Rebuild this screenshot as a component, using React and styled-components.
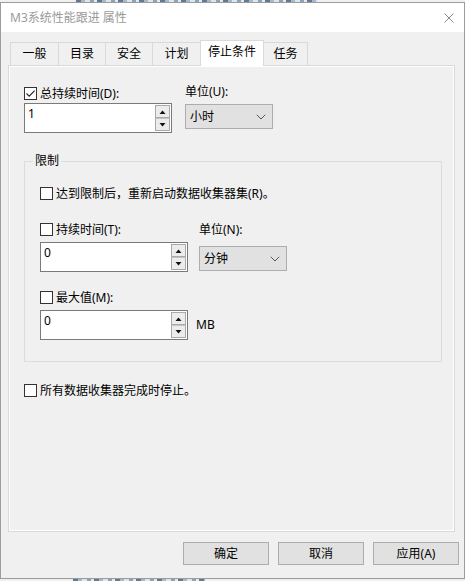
import React from 'react';
import styled, { createGlobalStyle } from 'styled-components';

const Global = createGlobalStyle`
  html, body { margin: 0; padding: 0; }
  body {
    width: 465px; height: 581px; overflow: hidden; background: #eef0f2;
    font-family: "Noto Sans", "Noto Sans CJK SC", sans-serif;
    font-size: 12px; color: #000;
  }
  * { box-sizing: border-box; }
`;

const Screen = styled.div`
  width: 465px; height: 581px; display: flex; flex-direction: column; overflow: hidden;
`;

const Backdrop = styled.div`
  flex: none; height: 2px;
  background:
    repeating-linear-gradient(90deg, #5f7a94 0 5px, #a9b9c8 5px 9px, #dfe5ea 9px 14px, #8ea3b6 14px 18px, #e6eaee 18px 21px)
      ${p => p.$from}px 0 / ${p => p.$to - p.$from}px 100% no-repeat,
    #eef0f2;
`;

const Window = styled.div`
  flex: 1; display: flex; flex-direction: column;
  border: 1px solid #9c9c9c; background: #f0f0f0;
`;

const TitleBar = styled.div`
  flex: none; height: 29px; background: #fff;
  display: flex; align-items: center; justify-content: space-between;
  padding-left: 9px;
`;

const Title = styled.span`
  color: #9a9a9a; font-size: 12px; line-height: 16px; white-space: nowrap;
`;

const CloseButton = styled.div`
  width: 30px; height: 29px; display: flex; align-items: center; justify-content: center;
`;

const Body = styled.div`
  flex: 1; display: flex; flex-direction: column; padding: 8px 0 0 7px;
`;

const TabRow = styled.div`
  display: flex; align-items: flex-end; height: 26px; padding-left: 2px;
  margin-bottom: -1px; position: relative; z-index: 1;
`;

const Tab = styled.div`
  width: ${p => p.$w}px;
  height: ${p => (p.$active ? 26 : 23)}px;
  margin-bottom: ${p => (p.$active ? 0 : 1)}px;
  margin-left: ${p => (p.$first ? 0 : -1)}px;
  border: 1px solid #d9d9d9; border-bottom: none;
  background: ${p => (p.$active ? '#fff' : '#f0f0f0')};
  position: relative; z-index: ${p => (p.$active ? 2 : 1)};
  display: flex; align-items: center; justify-content: center;
  padding-bottom: ${p => (p.$active ? 4 : 0)}px;
  font-size: 12px; line-height: 16px; white-space: nowrap;
`;

const Panel = styled.div`
  width: 447px; height: 467px; flex: none;
  border: 1px solid #d9d9d9; box-shadow: inset 0 0 0 1px #fff;
  background: #f0f0f0;
  padding: 19px 12px 0 15px;
  display: flex; flex-direction: column;
`;

const FieldGrid = styled.div`
  display: grid; grid-template-columns: 148px auto; column-gap: ${p => p.$gap}px;
  margin-top: ${p => p.$mt || 0}px; justify-content: start;
`;

const FieldColumn = styled.div`
  display: flex; flex-direction: column; align-items: flex-start;
`;

const CheckRow = styled.div`
  display: flex; align-items: center; gap: 3px; height: 17px;
  margin-top: ${p => p.$mt || 0}px; white-space: nowrap;
`;

const Box = styled.span`
  width: 13px; height: 13px; flex: none; border: 1px solid #333; background: #fff;
  display: flex; align-items: center; justify-content: center;
`;

const Label = styled.span`
  font-size: 12px; line-height: 16px;
`;

const UnitLabel = styled.div`
  height: 17px; display: flex; align-items: center; font-size: 12px; line-height: 16px;
  padding-bottom: ${p => p.$lift || 0}px;
`;

const SpinField = styled.div`
  width: 148px; height: 30px; margin-top: ${p => p.$mt || 0}px;
  border: 1px solid #7a7a7a; background: #fff;
  display: flex; align-items: stretch;
`;

const SpinValue = styled.div`
  flex: 1; padding: 2px 3px; font-size: 12px; line-height: 16px;
`;

const SpinButtons = styled.div`
  width: 16px; display: flex; flex-direction: column; padding: 1px 1px 1px 0;
`;

const SpinButton = styled.div`
  flex: 1; border: 1px solid #a9a9a9; background: #ececec;
  display: flex; align-items: center; justify-content: center;
  & + & { border-top-color: #c4c4c4; }
`;

const Select = styled.div`
  width: 88px; height: 25px; margin-top: ${p => p.$mt || 0}px;
  border: 1px solid #adadad; background: #e1e1e1;
  display: flex; align-items: center; justify-content: space-between;
  padding: 0 6px 0 4px; font-size: 12px; line-height: 16px;
`;

const Group = styled.fieldset`
  margin: 20px 0 0 0; min-width: 0;
  border: 1px solid #dcdcdc;
  padding: 16px 15px 21px 15px;
  display: flex; flex-direction: column;
`;

const Legend = styled.legend`
  padding: 0 2px; margin-left: -7px; font-size: 12px; line-height: 16px;
`;

const InputRow = styled.div`
  display: flex; align-items: center; gap: 8px; margin-top: ${p => p.$mt || 0}px;
`;

const ButtonRow = styled.div`
  display: flex; justify-content: flex-end; gap: 9px; margin-top: 10px; padding-right: 5px;
`;

const Button = styled.div`
  width: 86px; height: 23px; border: 1px solid #adadad; background: #e1e1e1;
  display: flex; align-items: center; justify-content: center;
  font-size: 12px; line-height: 16px;
`;

const Check = ({ checked, children, mt }) => (
  <CheckRow $mt={mt}>
    <Box>
      {checked && (
        <svg width="11" height="11" viewBox="0 0 11 11">
          <path d="M1.5 5.5 L4.2 8.2 L9.6 2.6" fill="none" stroke="#222" strokeWidth="1.1" />
        </svg>
      )}
    </Box>
    <Label>{children}</Label>
  </CheckRow>
);

const Arrow = ({ up }) => (
  <svg width="7" height="4" viewBox="0 0 7 4">
    {up ? <path d="M0.5 4 L3.5 0.5 L6.5 4 Z" fill="#111" /> : <path d="M0.5 0 L3.5 3.5 L6.5 0 Z" fill="#111" />}
  </svg>
);

const Spin = ({ value, mt }) => (
  <SpinField $mt={mt}>
    <SpinValue>{value}</SpinValue>
    <SpinButtons>
      <SpinButton><Arrow up /></SpinButton>
      <SpinButton><Arrow /></SpinButton>
    </SpinButtons>
  </SpinField>
);

const Dropdown = ({ value, mt }) => (
  <Select $mt={mt}>
    <span>{value}</span>
    <svg width="10" height="6" viewBox="0 0 10 6">
      <path d="M0.8 0.8 L5 5 L9.2 0.8" fill="none" stroke="#555" strokeWidth="1" />
    </svg>
  </Select>
);

const tabs = [
  { label: '一般', w: 49 },
  { label: '目录', w: 48 },
  { label: '安全', w: 48 },
  { label: '计划', w: 49 },
  { label: '停止条件', w: 64, active: true },
  { label: '任务', w: 45 },
];

export default function App() {
  return (
    <Screen>
      <Global />
      <Backdrop $from={76} $to={318} />
      <Window>
        <TitleBar>
          <Title>M3系统性能跟进 属性</Title>
          <CloseButton>
            <svg width="10" height="10" viewBox="0 0 10 10">
              <path d="M0.5 0.5 L9.5 9.5 M9.5 0.5 L0.5 9.5" stroke="#8a8a8a" strokeWidth="1" />
            </svg>
          </CloseButton>
        </TitleBar>
        <Body>
          <TabRow>
            {tabs.map((t, i) => (
              <Tab key={t.label} $w={t.w} $active={t.active} $first={i === 0}>{t.label}</Tab>
            ))}
          </TabRow>
          <Panel>
            <FieldGrid $gap={13}>
              <FieldColumn>
                <Check checked>总持续时间(D):</Check>
                <Spin value="1" mt={1} />
              </FieldColumn>
              <FieldColumn>
                <UnitLabel $lift={3}>单位(U):</UnitLabel>
                <Dropdown value="小时" mt={2} />
              </FieldColumn>
            </FieldGrid>

            <Group>
              <Legend>限制</Legend>
              <Check>达到限制后，重新启动数据收集器集(R)。</Check>
              <FieldGrid $gap={11} $mt={19}>
                <FieldColumn>
                  <Check>持续时间(T):</Check>
                  <Spin value="0" mt={4} />
                </FieldColumn>
                <FieldColumn>
                  <UnitLabel>单位(N):</UnitLabel>
                  <Dropdown value="分钟" mt={8} />
                </FieldColumn>
              </FieldGrid>
              <Check mt={17}>最大值(M):</Check>
              <InputRow $mt={4}>
                <Spin value="0" />
                <Label>MB</Label>
              </InputRow>
            </Group>

            <Check mt={20}>所有数据收集器完成时停止。</Check>
          </Panel>
          <ButtonRow>
            <Button>确定</Button>
            <Button>取消</Button>
            <Button>应用(A)</Button>
          </ButtonRow>
        </Body>
      </Window>
      <Backdrop $from={73} $to={205} />
    </Screen>
  );
}
